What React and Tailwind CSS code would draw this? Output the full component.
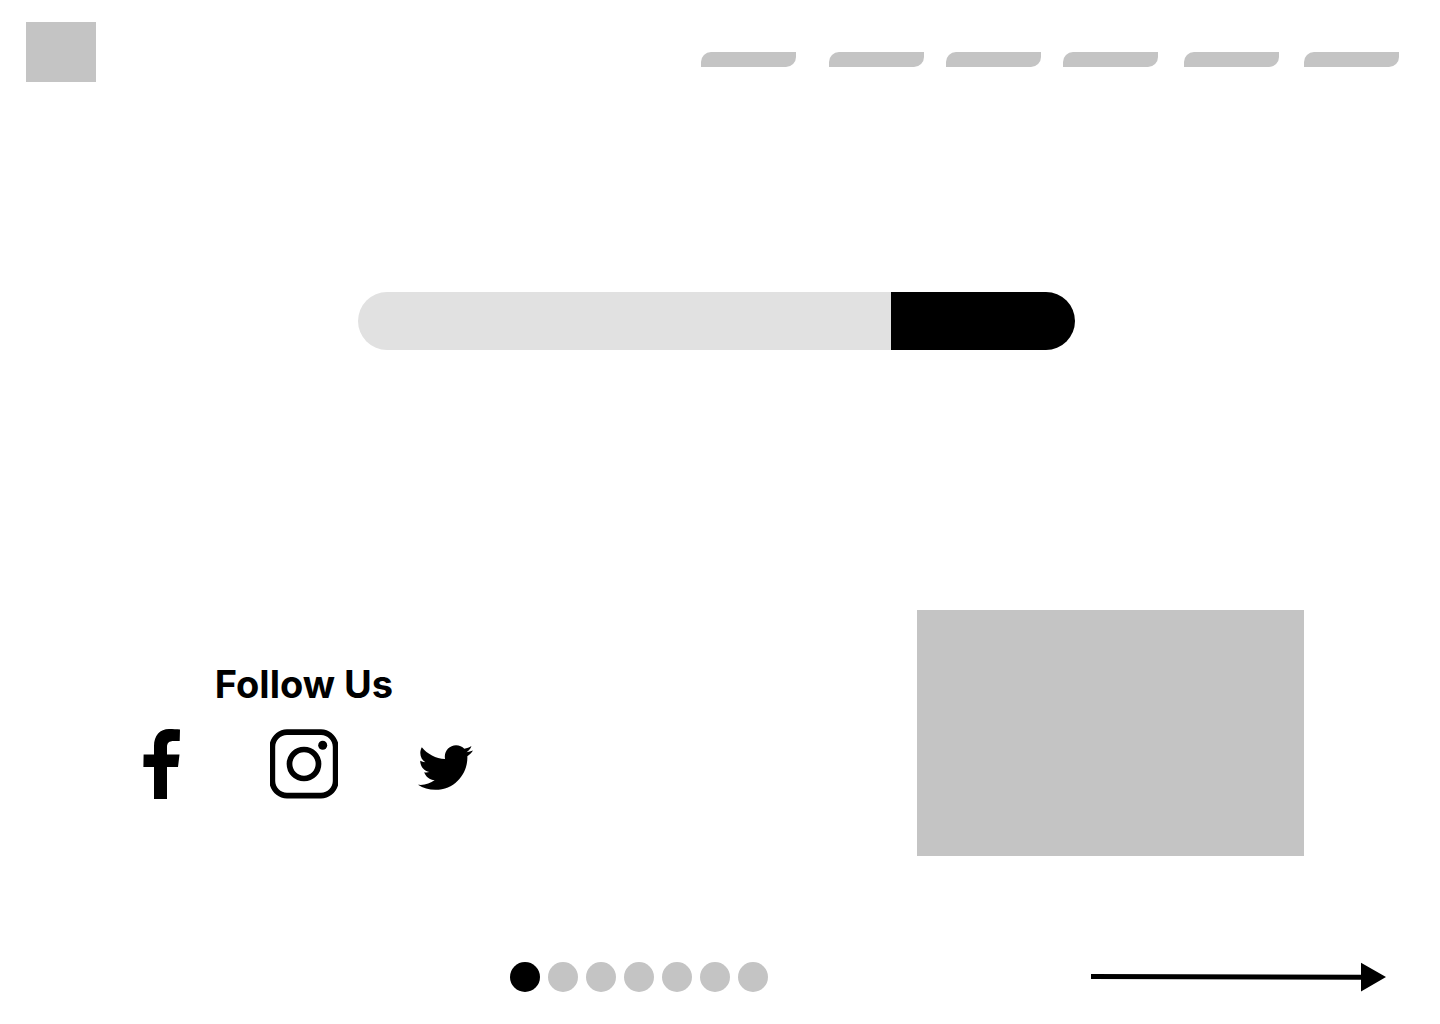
import { FaTwitter } from "react-icons/fa";

const links = [
  { label: "Home", gap: "" },
  { label: "About", gap: "ml-[33px]" },
  { label: "Services", gap: "ml-[22px]" },
  { label: "Gallery", gap: "ml-[22px]" },
  { label: "News", gap: "ml-[26px]" },
  { label: "Contact", gap: "ml-[25px]" },
];

const slides = [1, 2, 3, 4, 5, 6, 7];

function Header() {
  return (
    <header className="flex items-start justify-between pt-[22px] pr-[41px] pl-[26px]">
      <a href="#home" aria-label="Logo" className="block h-[60px] w-[70px] bg-[#c4c4c4]" />
      <nav aria-label="Main" className="flex pt-[30px]">
        {links.map((link) => (
          <a
            key={link.label}
            href="#page"
            aria-label={link.label}
            className={`block h-[15px] w-[95px] rounded-tl-[10px] rounded-br-[10px] bg-[#c4c4c4] ${link.gap}`}
          />
        ))}
      </nav>
    </header>
  );
}

function SearchBar() {
  return (
    <form className="mt-[210px] pr-[7px]" onSubmit={(e) => e.preventDefault()}>
      <div className="mx-auto flex h-[58px] max-w-[717px] overflow-hidden rounded-full">
        <input
          type="search"
          aria-label="Search"
          className="min-w-0 flex-1 bg-[#e1e1e1] px-8 outline-none"
        />
        <button type="submit" aria-label="Submit search" className="w-[184px] bg-black" />
      </div>
    </form>
  );
}

function FacebookIcon() {
  return (
    <svg width="38" height="70" viewBox="0 0 38 70" aria-hidden="true">
      <path d="M11 70V38H.4L.6 25.6H11V17C11 6.500 17 0 26 0C30 0 34 .2 37 .6L36.700 12H31C26 12 24 14 24 18V25.600H36.500L35 38H24V70Z" />
    </svg>
  );
}

function InstagramIcon() {
  return (
    <svg width="68" height="70" viewBox="0 0 68 70" aria-hidden="true">
      <path
        fillRule="evenodd"
        d="M17 .3H51C59 .3 65.500 6 68 13.500V56.500C65.500 64 59 69.500 51 69.500H17C9 69.500 2.500 64 0 56.500V13.500C2.500 6 9 .3 17 .3ZM17 6C10.500 6 5.200 11.300 5.200 18V52C5.200 58.500 10.500 63.800 17 63.800H51C57.500 63.800 62.800 58.500 62.800 52V18C62.800 11.300 57.500 6 51 6Z"
      />
      <circle cx="34" cy="35" r="14.500" fill="none" stroke="black" strokeWidth="5.700" />
      <circle cx="52.700" cy="16.200" r="4.500" />
    </svg>
  );
}

function FollowUs() {
  return (
    <section className="w-[330px] pt-[50px]">
      <h2 className="pr-2 text-center font-['Inter',sans-serif] text-[38px] leading-[48px] font-bold">
        Follow Us
      </h2>
      <div className="mt-[21px] flex items-center justify-between">
        <a href="#facebook" aria-label="Facebook">
          <FacebookIcon />
        </a>
        <a href="#instagram" aria-label="Instagram" className="ml-2">
          <InstagramIcon />
        </a>
        <a href="#twitter" aria-label="Twitter" className="pt-1.5">
          <FaTwitter size={55} />
        </a>
      </div>
    </section>
  );
}

function Footer() {
  return (
    <footer className="mt-[105px] flex items-center justify-between pr-[54px] pb-8 pl-[510px]">
      <div className="flex gap-2">
        {slides.map((n) => (
          <button
            key={n}
            type="button"
            aria-label={`Slide ${n}`}
            className={`size-[30px] rounded-full ${n === 1 ? "bg-black" : "bg-[#c4c4c4]"}`}
          />
        ))}
      </div>
      <button type="button" aria-label="Next">
        <svg width="295" height="31" viewBox="0 0 295 31" className="block">
          <path d="M0 13L270 13.800V1.800L295 16L270 30.500V18.800L0 18Z" />
        </svg>
      </button>
    </footer>
  );
}

export default function App() {
  return (
    <div className="min-h-screen bg-white text-black">
      <Header />
      <main>
        <SearchBar />
        <div className="mt-[260px] flex items-start justify-between pr-[136px] pl-[143px]">
          <FollowUs />
          <div role="img" aria-label="Featured" className="h-[246px] w-[387px] bg-[#c4c4c4]" />
        </div>
      </main>
      <Footer />
    </div>
  );
}
